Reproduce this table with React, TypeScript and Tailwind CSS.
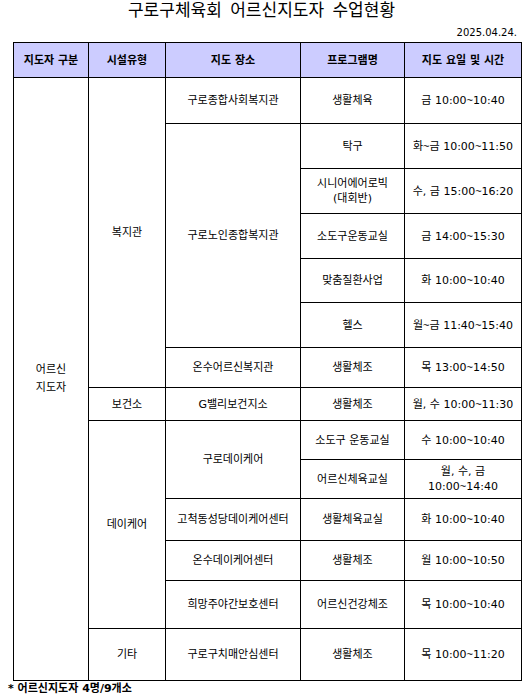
const cell = 'border border-black text-center align-middle p-0'
const head = 'border border-black text-center align-middle p-0 bg-[#ccccff] font-bold'

// the tilde in DejaVu is too wide, take it from Liberation Sans
function T({ s }: { s: string }) {
  const parts = s.split('~')
  return (
    <>
      {parts.map((p, i) => (
        <span key={i}>
          {i > 0 && <span className="font-['Liberation_Sans',sans-serif]">~</span>}
          {p}
        </span>
      ))}
    </>
  )
}

export default function App() {
  return (
    <div className="w-[529px] h-[699px] bg-white text-black font-['DejaVu_Sans','Noto_Sans_CJK_KR',sans-serif] text-[11px] leading-[15px]">
      <div className="h-[20px] pr-[6px] text-center text-[17px] leading-[20px] [word-spacing:3px]">
        구로구체육회 어르신지도자 수업현황
      </div>
      <div className="h-[22px] flex items-center justify-end pr-[12px] pt-[2px] text-[10px]">2025.04.24.</div>

      <div className="pl-[13px]">
        <table className="w-[508px] table-fixed border-collapse">
          <colgroup>
            <col className="w-[75px]" />
            <col className="w-[77px]" />
            <col className="w-[135px]" />
            <col className="w-[104px]" />
            <col className="w-[117px]" />
          </colgroup>
          <thead>
            <tr className="h-[35px]">
              <th className={head}>지도자 구분</th>
              <th className={head}>시설유형</th>
              <th className={head}>지도 장소</th>
              <th className={head}>프로그램명</th>
              <th className={head}>지도 요일 및 시간</th>
            </tr>
          </thead>
          <tbody>
            <tr className="h-[46px]">
              <td className={`${cell} leading-[18px]`} rowSpan={14}>
                어르신
                <br />
                지도자
              </td>
              <td className={cell} rowSpan={7}>복지관</td>
              <td className={cell}>구로종합사회복지관</td>
              <td className={cell}>생활체육</td>
              <td className={cell}><T s="금 10:00~10:40" /></td>
            </tr>
            <tr className="h-[45px]">
              <td className={cell} rowSpan={5}>구로노인종합복지관</td>
              <td className={cell}>탁구</td>
              <td className={cell}><T s="화~금 10:00~11:50" /></td>
            </tr>
            <tr className="h-[45px]">
              <td className={cell}>
                시니어에어로빅
                <br />
                (대회반)
              </td>
              <td className={cell}><T s="수, 금 15:00~16:20" /></td>
            </tr>
            <tr className="h-[45px]">
              <td className={cell}>소도구운동교실</td>
              <td className={cell}><T s="금 14:00~15:30" /></td>
            </tr>
            <tr className="h-[44px]">
              <td className={cell}>맞춤질환사업</td>
              <td className={cell}><T s="화 10:00~10:40" /></td>
            </tr>
            <tr className="h-[45px]">
              <td className={cell}>헬스</td>
              <td className={cell}><T s="월~금 11:40~15:40" /></td>
            </tr>
            <tr className="h-[40px]">
              <td className={cell}>온수어르신복지관</td>
              <td className={cell}>생활체조</td>
              <td className={cell}><T s="목 13:00~14:50" /></td>
            </tr>
            <tr className="h-[33px]">
              <td className={cell}>보건소</td>
              <td className={cell}>G밸리보건지소</td>
              <td className={cell}>생활체조</td>
              <td className={cell}><T s="월, 수 10:00~11:30" /></td>
            </tr>
            <tr className="h-[39px]">
              <td className={cell} rowSpan={5}>데이케어</td>
              <td className={cell} rowSpan={2}>구로데이케어</td>
              <td className={cell}>소도구 운동교실</td>
              <td className={cell}><T s="수 10:00~10:40" /></td>
            </tr>
            <tr className="h-[39px]">
              <td className={cell}>어르신체육교실</td>
              <td className={cell}>
                월, 수, 금
                <br />
                <T s="10:00~14:40" />
              </td>
            </tr>
            <tr className="h-[42px]">
              <td className={cell}>고척동성당데이케어센터</td>
              <td className={cell}>생활체육교실</td>
              <td className={cell}><T s="화 10:00~10:40" /></td>
            </tr>
            <tr className="h-[40px]">
              <td className={cell}>온수데이케어센터</td>
              <td className={cell}>생활체조</td>
              <td className={cell}><T s="월 10:00~10:50" /></td>
            </tr>
            <tr className="h-[48px]">
              <td className={cell}>희망주야간보호센터</td>
              <td className={cell}>어르신건강체조</td>
              <td className={cell}><T s="목 10:00~10:40" /></td>
            </tr>
            <tr className="h-[52px]">
              <td className={cell}>기타</td>
              <td className={cell}>구로구치매안심센터</td>
              <td className={cell}>생활체조</td>
              <td className={cell}><T s="목 10:00~11:20" /></td>
            </tr>
          </tbody>
        </table>
      </div>

      <div className="pl-[8px] h-[16px] leading-[16px] font-bold">* 어르신지도자 4명/9개소</div>
    </div>
  )
}
